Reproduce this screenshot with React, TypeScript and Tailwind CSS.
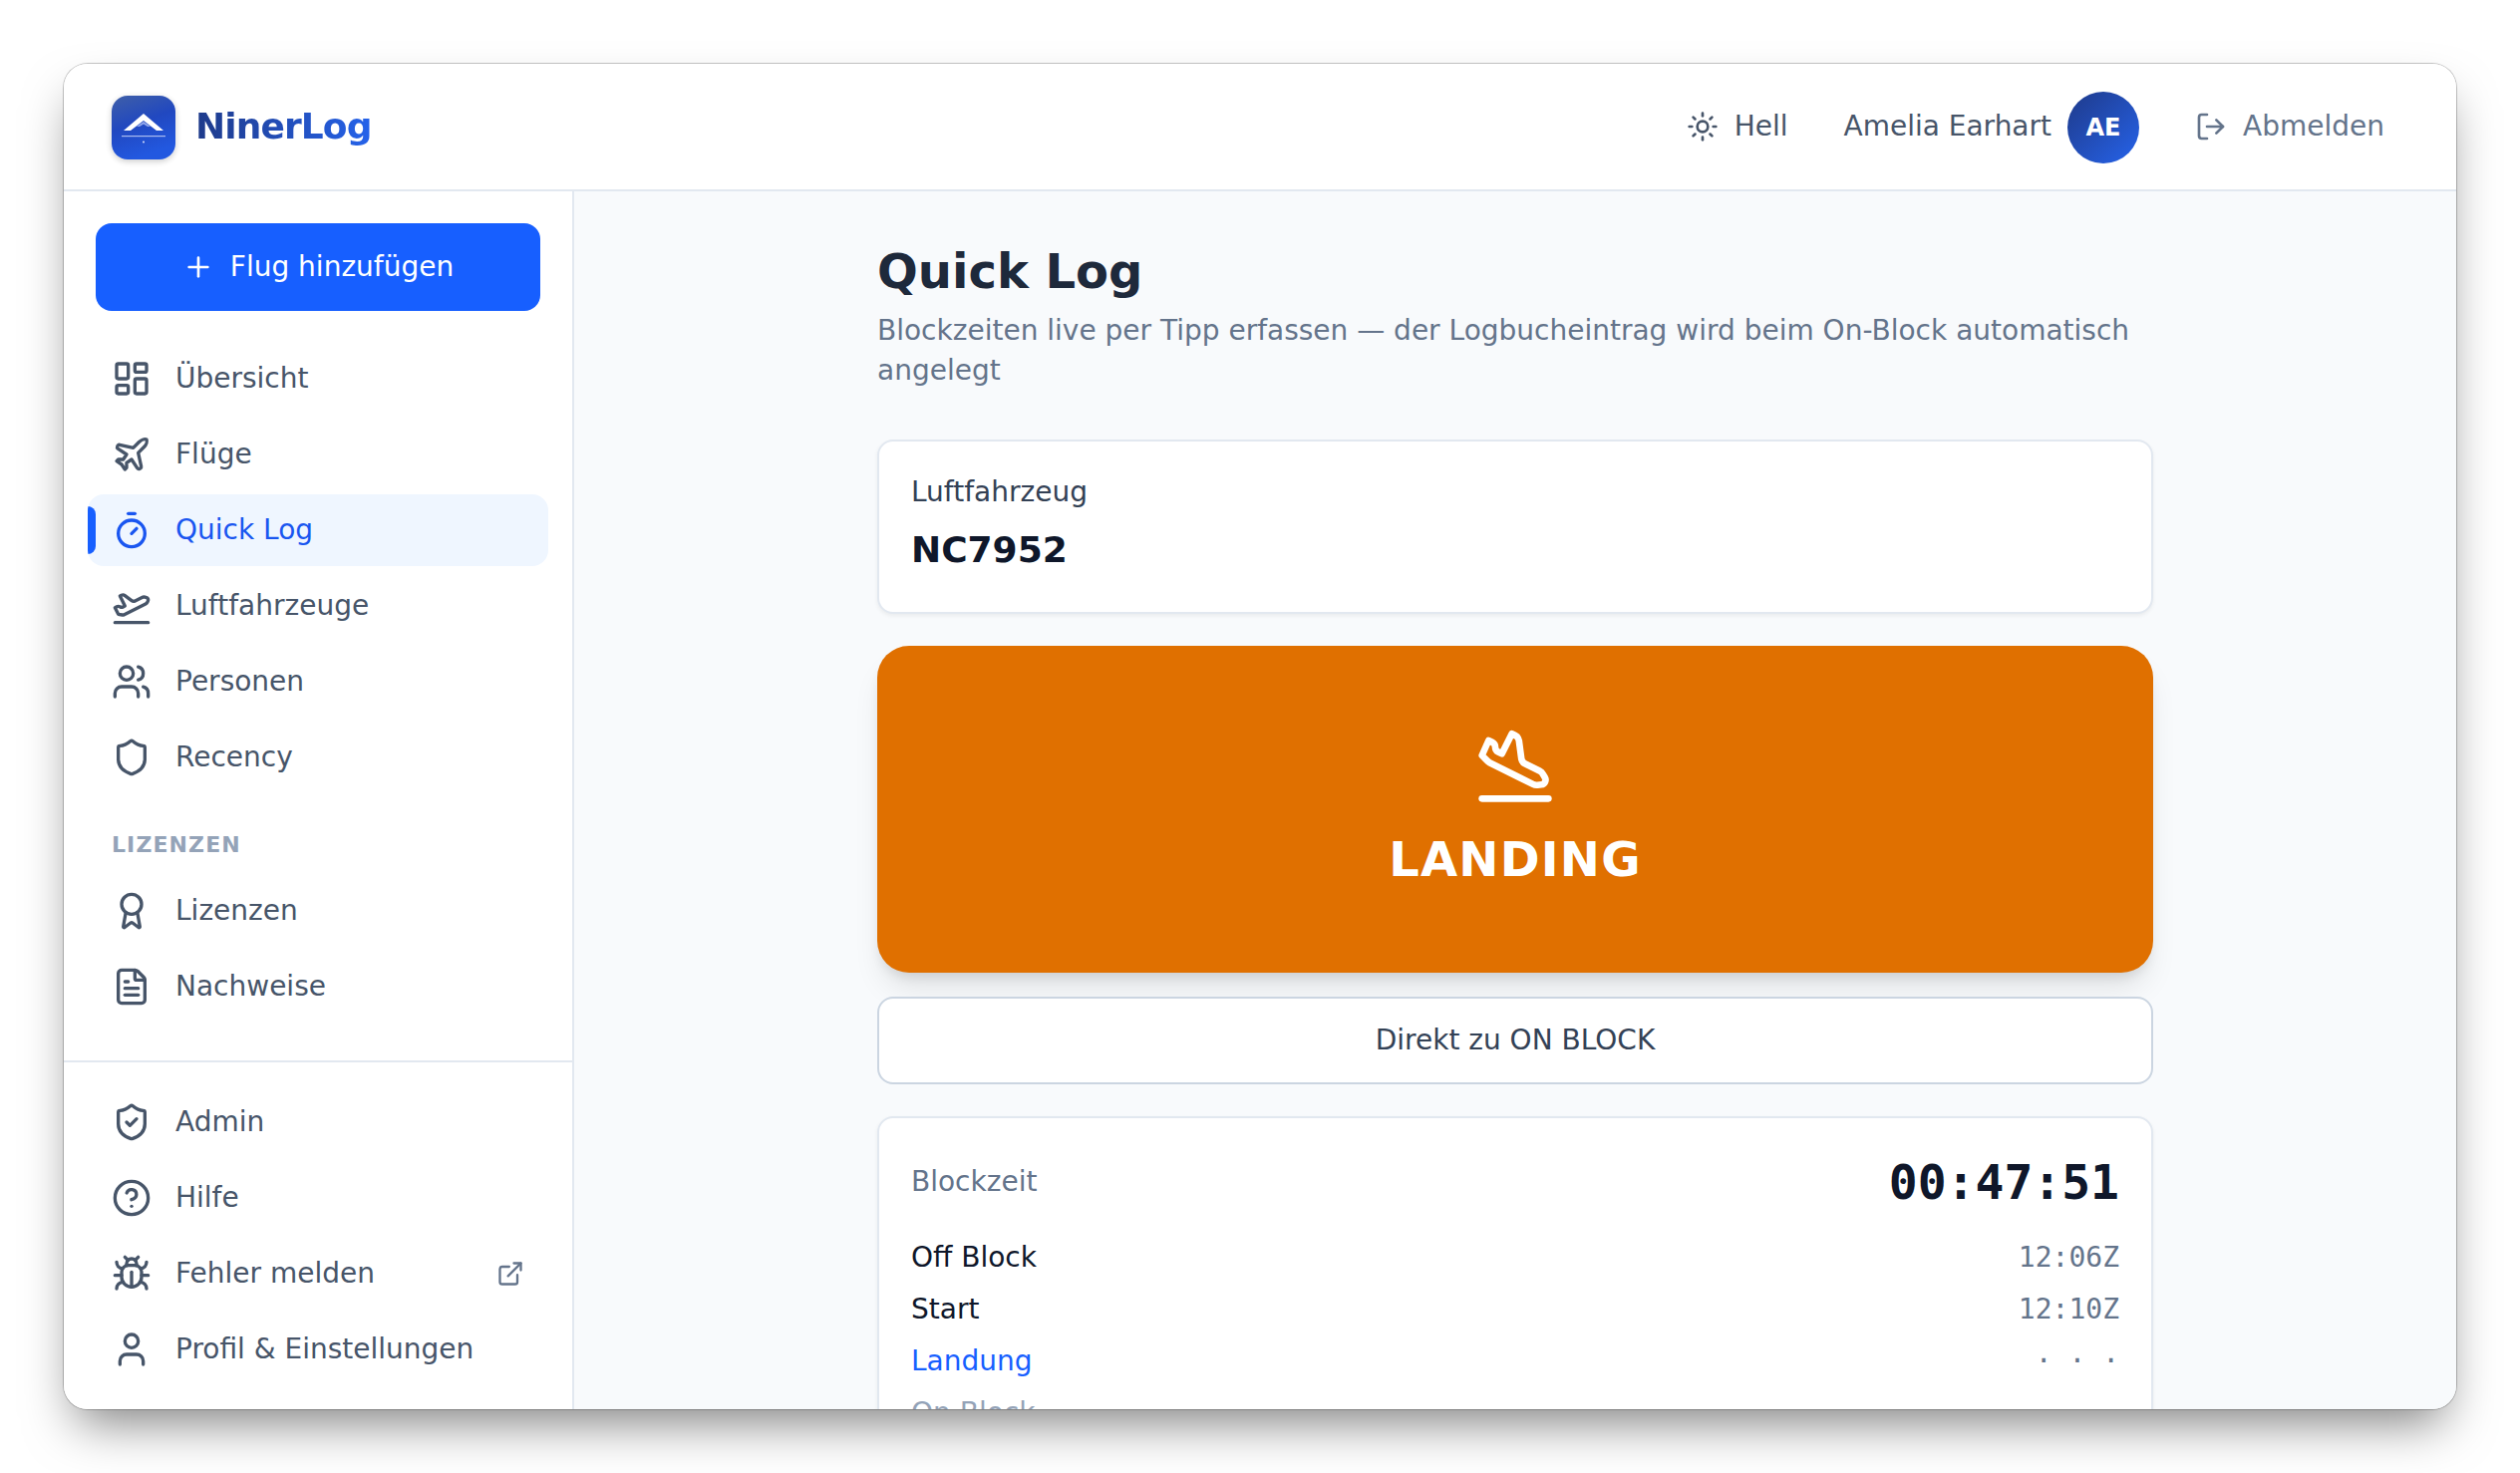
import type { ReactNode } from 'react';
import {
  Award,
  Bug,
  CircleHelp,
  ExternalLink,
  FileText,
  LayoutDashboard,
  LogOut,
  Plane,
  PlaneLanding,
  PlaneTakeoff,
  Plus,
  Shield,
  ShieldCheck,
  Sun,
  Timer,
  User,
  Users,
} from 'lucide-react';

type IconType = typeof Plane;

function Logo() {
  return (
    <svg viewBox="0 0 64 64" className="mt-[2px] w-[64px] h-[64px] rounded-[16px] shadow-[0_2px_6px_rgba(0,0,0,0.2)]">
      <defs>
        <linearGradient id="logoBg" x1="0" y1="0" x2="0.35" y2="1">
          <stop offset="0" stopColor="#3f5fa8" />
          <stop offset="0.5" stopColor="#2148c0" />
          <stop offset="1" stopColor="#2258e0" />
        </linearGradient>
      </defs>
      <rect width="64" height="64" fill="url(#logoBg)" />
      <path d="M12 35 L32 18 L52 35 L45 35 L32 25 L19 35 Z" fill="#fff" />
      <path d="M25 31 L32 26 L39 31 L36 31 L32 28.5 L28 31 Z" fill="#93a9ec" />
      <rect x="10" y="40" width="44" height="1.2" fill="#a9bbf0" />
      <circle cx="32" cy="46.5" r="1" fill="#dbe4fb" />
    </svg>
  );
}

function NavItem({ icon: Icon, label, active, trailing }: { icon: IconType; label: string; active?: boolean; trailing?: ReactNode }) {
  return (
    <div
      className={`relative flex items-center gap-[24px] h-[72px] pl-[24px] pr-[24px] rounded-[16px] overflow-hidden text-[28px] leading-[40px] ${
        active ? 'bg-[#eff6ff] text-[#1a56f0]' : 'text-[#475569]'
      }`}
    >
      {active && <span className="absolute left-0 top-[12px] w-[8px] h-[48px] rounded-r-[8px] bg-[#175fff]" />}
      <Icon className="w-[40px] h-[40px] shrink-0" strokeWidth={2} />
      <span className="flex-1">{label}</span>
      {trailing}
    </div>
  );
}

function Sidebar() {
  return (
    <aside className="w-[512px] shrink-0 flex flex-col justify-between bg-white border-r-2 border-[#e2e8f0]">
      <div className="px-[24px] pt-[32px]">
        <button className="mx-[8px] w-[446px] h-[88px] flex items-center justify-center gap-[16px] rounded-[16px] bg-[#175fff] text-white text-[28px]">
          <Plus className="w-[32px] h-[32px]" strokeWidth={2} />
          Flug hinzufügen
        </button>
        <nav className="mt-[32px] flex flex-col gap-[4px]">
          <NavItem icon={LayoutDashboard} label="Übersicht" />
          <NavItem icon={Plane} label="Flüge" />
          <NavItem icon={Timer} label="Quick Log" active />
          <NavItem icon={PlaneTakeoff} label="Luftfahrzeuge" />
          <NavItem icon={Users} label="Personen" />
          <NavItem icon={Shield} label="Recency" />
          <div className="mt-[32px] mb-[10px] pl-[24px] h-[32px] text-[22px] leading-[32px] font-bold tracking-[0.05em] uppercase text-[#94a3b8]">
            Lizenzen
          </div>
          <NavItem icon={Award} label="Lizenzen" />
          <NavItem icon={FileText} label="Nachweise" />
        </nav>
      </div>
      <div className="px-[24px] py-[24px] border-t-2 border-[#e2e8f0] flex flex-col gap-[4px]">
        <NavItem icon={ShieldCheck} label="Admin" />
        <NavItem icon={CircleHelp} label="Hilfe" />
        <NavItem
          icon={Bug}
          label="Fehler melden"
          trailing={<ExternalLink className="w-[28px] h-[28px] text-[#64748b]" strokeWidth={2} />}
        />
        <NavItem icon={User} label="Profil & Einstellungen" />
      </div>
    </aside>
  );
}

function Header() {
  return (
    <header className="h-[128px] shrink-0 flex items-center justify-between pl-[48px] pr-[72px] bg-white border-b-2 border-[#e2e8f0]">
      <div className="flex items-center gap-[20px]">
        <Logo />
        <span className="text-[36px] leading-[48px] font-bold tracking-[-0.025em] bg-gradient-to-r from-[#1e3a8a] to-[#2563eb] bg-clip-text text-transparent">
          NinerLog
        </span>
      </div>
      <div className="flex items-center text-[28px] leading-[40px]">
        <div className="flex items-center gap-[16px] text-[#475569]">
          <Sun className="w-[32px] h-[32px]" strokeWidth={2} />
          Hell
        </div>
        <span className="ml-[56px] text-[#475569]">Amelia Earhart</span>
        <div className="mt-[2px] ml-[16px] w-[72px] h-[72px] rounded-full flex items-center justify-center bg-gradient-to-br from-[#1e3a8a] to-[#2563eb] text-white text-[24px] font-bold">
          AE
        </div>
        <div className="ml-[56px] flex items-center gap-[16px] text-[#64748b]">
          <LogOut className="w-[32px] h-[32px]" strokeWidth={2} />
          Abmelden
        </div>
      </div>
    </header>
  );
}

function TimeRow({ label, value, labelClass, valueClass }: { label: string; value: string; labelClass: string; valueClass?: string }) {
  return (
    <div className="flex items-center justify-between h-[52px]">
      <span className={`text-[28px] ${labelClass}`}>{label}</span>
      <span className={`text-[28px] font-['DejaVu_Sans_Mono',monospace] ${valueClass ?? 'text-[#64748b]'}`}>{value}</span>
    </div>
  );
}

function Main() {
  return (
    <main className="flex-1 min-w-0 overflow-hidden bg-[#f8fafc] pt-[48px]">
      <div className="w-[1280px] mx-auto">
        <h1 className="text-[48px] leading-[64px] font-bold text-[#1e293b]">Quick Log</h1>
        <p className="mt-[8px] text-[28px] leading-[40px] text-[#64748b]">
          Blockzeiten live per Tipp erfassen — der Logbucheintrag wird beim On-Block automatisch angelegt
        </p>
        <section className="mt-[49px] h-[175px] rounded-[16px] bg-white border-2 border-[#e2e8f0] shadow-[0_2px_4px_rgba(0,0,0,0.06)] px-[32px] pt-[31px]">
          <div className="text-[28px] leading-[40px] text-[#334155]">Luftfahrzeug</div>
          <div className="mt-[14px] text-[36px] leading-[48px] font-bold text-[#0f172a]">NC7952</div>
        </section>
        <button className="mt-[32px] w-full h-[328px] flex flex-col items-center justify-center gap-[20px] rounded-[32px] bg-[#e07000] text-white shadow-[0_20px_30px_-6px_rgba(0,0,0,0.1),0_8px_12px_-4px_rgba(0,0,0,0.1)]">
          <PlaneLanding className="w-[80px] h-[80px]" strokeWidth={2} />
          <span className="text-[48px] leading-[68px] font-bold tracking-[0.025em]">LANDING</span>
        </button>
        <button className="mt-[24px] w-full h-[88px] rounded-[16px] bg-white border-2 border-[#cbd5e1] text-[28px] text-[#334155]">
          Direkt zu ON BLOCK
        </button>
        <section className="mt-[32px] rounded-[16px] bg-white border-2 border-[#e2e8f0] shadow-[0_2px_4px_rgba(0,0,0,0.06)] px-[32px] pt-[32px] pb-[32px]">
          <div className="flex items-center justify-between h-[64px] mb-[18px]">
            <span className="text-[28px] text-[#64748b]">Blockzeit</span>
            <span className="text-[48px] font-bold text-[#0f172a] font-['DejaVu_Sans_Mono',monospace]">00:47:51</span>
          </div>
          <TimeRow label="Off Block" value="12:06Z" labelClass="text-[#0f172a]" />
          <TimeRow label="Start" value="12:10Z" labelClass="text-[#0f172a]" />
          <TimeRow label="Landung" value="· · ·" labelClass="text-[#175fff]" />
          <TimeRow label="On Block" value="· · ·" labelClass="text-[#94a3b8]" />
        </section>
      </div>
    </main>
  );
}

export default function App() {
  return (
    <div className="w-[2528px] h-[1478px] bg-white p-[64px] font-['DejaVu_Sans',sans-serif]">
      <div className="w-[2400px] h-[1350px] flex flex-col rounded-[24px] overflow-hidden shadow-[0_0_0_1px_rgba(0,0,0,0.22),0_25px_50px_-12px_rgba(0,0,0,0.5)]">
        <Header />
        <div className="flex-1 min-h-0 flex">
          <Sidebar />
          <Main />
        </div>
      </div>
    </div>
  );
}
